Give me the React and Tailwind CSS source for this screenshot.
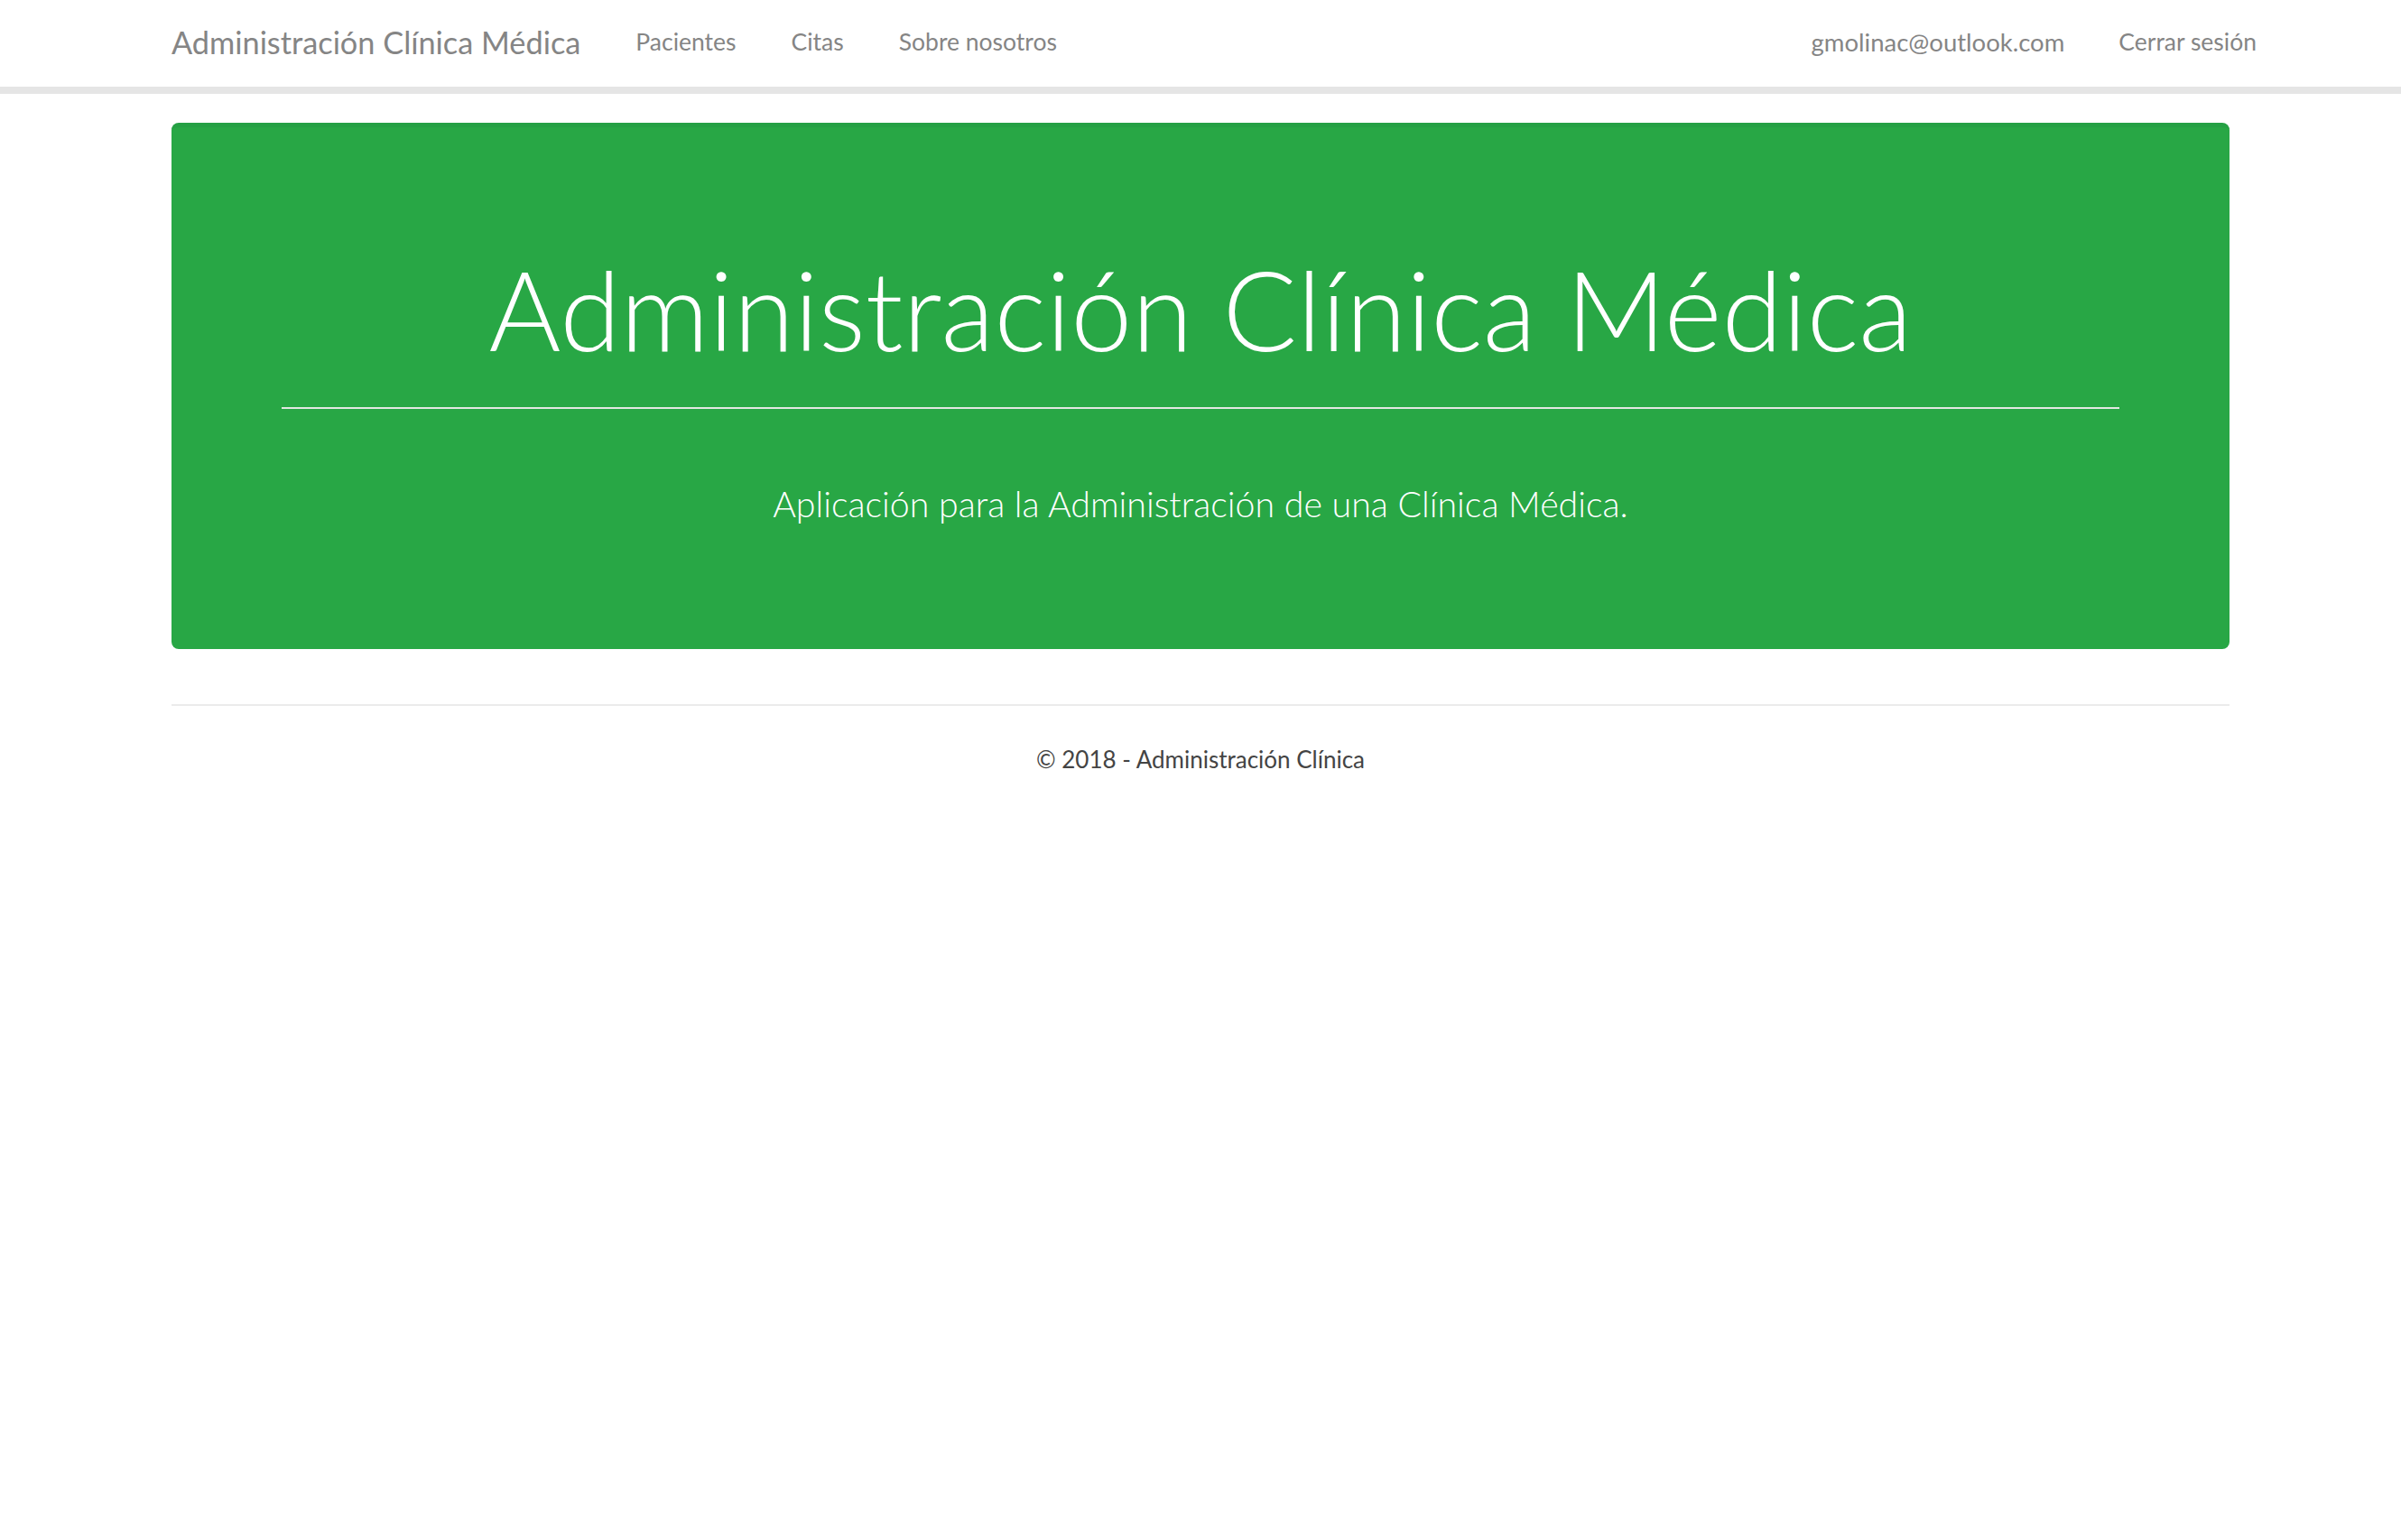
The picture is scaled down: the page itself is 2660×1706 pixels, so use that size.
const navLinks = ["Pacientes", "Citas", "Sobre nosotros"];

const Navbar = () => {
  return (
    <nav className="h-[104px] border-b-[8px] border-[#e5e5e5] bg-white">
      <div className="flex h-full items-center justify-between pb-[3px] pl-[190px] pr-[160px]">
        <div className="flex items-center gap-[61px]">
          <a className="text-[34.3px] text-[#858585]">Administración Clínica Médica</a>
          {navLinks.map((link) => (
            <a key={link} className="text-[26.5px] text-[#858585]">
              {link}
            </a>
          ))}
        </div>
        <div className="flex items-center gap-[60px]">
          <a className="text-[27.5px] text-[#858585]">gmolinac@outlook.com</a>
          <a className="text-[26.5px] text-[#858585]">Cerrar sesión</a>
        </div>
      </div>
    </nav>
  );
};

const App = () => {
  return (
    <div className="min-h-screen bg-white font-['Lato','Liberation_Sans',sans-serif]">
      <Navbar />
      <main className="mx-auto w-[2280px] pt-[32px]">
        <div className="h-[583px] rounded-[8px] border-t-[5px] border-[#25a044] bg-[#28a745] px-[122px] pt-[128px] text-center text-white">
          <h1 className="text-[122px] font-light leading-[1.2]">Administración Clínica Médica</h1>
          <hr className="mt-[36px] border-t-2 border-[#e2e8e2]" />
          <p className="mt-[76px] text-[39.3px] font-light leading-[1.5]">
            Aplicación para la Administración de una Clínica Médica.
          </p>
        </div>
        <footer className="mt-[61px] border-t-2 border-[#ebebeb] pt-[40px] text-center">
          <p className="text-[26px] leading-[1.5] text-[#444]">© 2018 - Administración Clínica</p>
        </footer>
      </main>
    </div>
  );
};

export default App;
